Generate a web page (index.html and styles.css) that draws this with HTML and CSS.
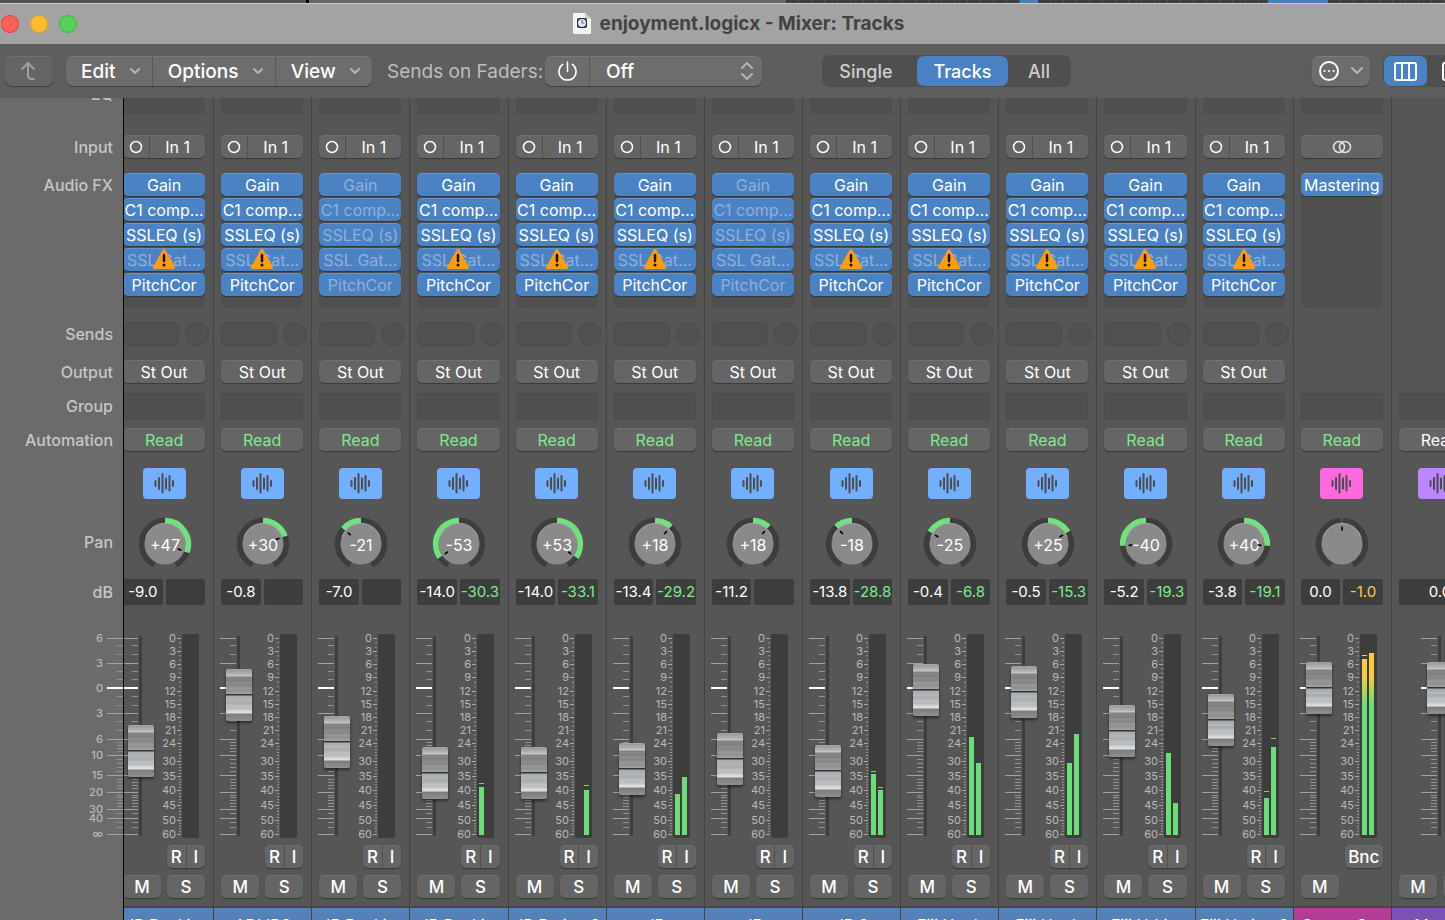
FILE: index.html
```html
<!doctype html>
<html lang="en">
  <head>
    <meta charset="UTF-8" />
    <title>enjoyment.logicx - Mixer: Tracks</title>
    <link rel="stylesheet" href="styles.css">
  </head>
  <body>
    <div class="desktop">
      <span class="desktop-left"></span>
      <span class="desktop-mid"></span>
      <span class="desktop-grid"></span>
      <span class="desktop-region"></span>
      <span class="desktop-grid wide"></span>
      <span class="desktop-region long"></span>
      <span class="desktop-grid rest"></span>
    </div>

    <header class="titlebar">
      <div class="lights">
        <button class="light red" aria-label="Close"></button>
        <button class="light yellow" aria-label="Minimize"></button>
        <button class="light green" aria-label="Zoom"></button>
      </div>
      <h1 class="title">
        <svg class="doc-icon" viewBox="0 0 18 21" aria-hidden="true">
          <path d="M1 0h11l6 6v14a1 1 0 0 1-1 1H1a1 1 0 0 1-1-1V1a1 1 0 0 1 1-1z" fill="#f4f4f4" />
          <path d="M12 0v5a1 1 0 0 0 1 1h5z" fill="#cfcfcf" />
          <rect x="4" y="5" width="10" height="10" rx="2" fill="#2c3138" />
          <circle cx="9" cy="10" r="4" fill="#dfe9f5" />
          <path d="M9 7v3h2.500" fill="none" stroke="#5a7ba6" stroke-width="1.200" />
        </svg>
        enjoyment.logicx - Mixer: Tracks
      </h1>
    </header>

    <nav class="toolbar">
      <button class="tool back" aria-label="Back" disabled>
        <svg viewBox="0 0 18 20"><path d="M2 8l6-6 6 6M8 2v12q0 4 4 4h2" /></svg>
      </button>
      <div class="tool-group menus">
        <button class="menu">Edit <svg viewBox="0 0 12 8"><path d="M2 2l4 4 4-4" /></svg></button>
        <button class="menu">Options <svg viewBox="0 0 12 8"><path d="M2 2l4 4 4-4" /></svg></button>
        <button class="menu">View <svg viewBox="0 0 12 8"><path d="M2 2l4 4 4-4" /></svg></button>
      </div>
      <label class="sends-label" for="sends-on-faders">Sends on Faders:</label>
      <div class="tool-group sends">
        <button class="power" aria-label="Sends on Faders power">
          <svg viewBox="0 0 22 22"><path d="M11 1v10M6 3.500a9 9 0 1 0 10 0" /></svg>
        </button>
        <select id="sends-on-faders" class="sends-select">
          <option>Off</option>
        </select>
        <svg class="updown" viewBox="0 0 12 18"><path d="M1 6l5-5 5 5M1 12l5 5 5-5" /></svg>
      </div>
      <div class="segments">
        <button class="segment">Single</button>
        <button class="segment active">Tracks</button>
        <button class="segment">All</button>
      </div>
      <button class="tool more" aria-label="More">
        <svg class="dots" viewBox="0 0 20 20">
          <circle cx="10" cy="10" r="9" />
          <path d="M5.500 10h.1M10 10h.1M14.500 10h.1" />
        </svg>
        <svg class="chevron" viewBox="0 0 12 8"><path d="M1 1l5 5 5-5" /></svg>
      </button>
      <div class="views">
        <button class="view active" aria-label="Channel strips">
          <svg viewBox="0 0 23 19"><rect x="1" y="1" width="21" height="17" rx="2" /><path d="M8 1v17M15 1v17" /></svg>
        </button>
        <button class="view" aria-label="Narrow strips">
          <svg viewBox="0 0 23 19"><rect x="1" y="1" width="21" height="17" rx="2" /></svg>
        </button>
      </div>
    </nav>

    <main class="mixer">
      <aside class="labels">
        <div class="row-eq">EQ</div>
        <div class="row-input">Input</div>
        <div class="row-fx">Audio FX</div>
        <div class="row-sends">Sends</div>
        <div class="row-output">Output</div>
        <div class="row-group">Group</div>
        <div class="row-auto">Automation</div>
        <div class="row-icon"></div>
        <div class="row-pan">Pan</div>
        <div class="row-db">dB</div>
        <div class="row-fader" id="side-scale"></div>
      </aside>
      <div class="strips-view">
        <div class="strips" id="strips"></div>
      </div>
    </main>

    <script src="mixer.js"></script>
  </body>
</html>
```

FILE: styles.css
```css
* {
  box-sizing: border-box;
}
body {
  margin: 0;
  height: 100vh;
  display: flex;
  flex-direction: column;
  overflow: hidden;
  background: #555;
  color: #fff;
  font-family: Inter, "Liberation Sans", sans-serif;
  font-size: 16px;
}
button,
select {
  font: inherit;
  color: inherit;
  border: none;
  padding: 0;
  margin: 0;
}
svg {
  display: block;
  fill: none;
}

/* arrange window behind */
.desktop {
  display: flex;
  height: 3px;
  background: #4a4a4a;
}
.desktop-left {
  flex: 0 0 309px;
  background: #525252;
  border-right: 3px solid #000;
}
.desktop-mid {
  flex: 0 0 477px;
  background: #666;
}
.desktop-grid {
  flex: 0 0 234px;
  background: repeating-linear-gradient(90deg, #3e3e3e 0 12px, #555 12px 13px);
}
.desktop-region {
  flex: 0 0 18px;
  background: #4b7fbd;
}
.desktop-grid.wide {
  flex-basis: 230px;
}
.desktop-region.long {
  flex-basis: 60px;
}
.desktop-grid.rest {
  flex: 1;
}

/* title bar */
.titlebar {
  position: relative;
  height: 41px;
  display: flex;
  align-items: center;
  justify-content: center;
  background: #a3a3a3;
  border-top: 1px solid #c9c9c9;
}
.lights {
  position: absolute;
  left: 1px;
  display: flex;
  gap: 11px;
}
.light {
  width: 18px;
  height: 18px;
  border-radius: 50%;
}
.light.red {
  background: #fe5f57;
  box-shadow: inset 0 0 0 1px #e0443e;
}
.light.yellow {
  background: #febc2e;
  box-shadow: inset 0 0 0 1px #dea123;
}
.light.green {
  background: #57d15a;
  box-shadow: inset 0 0 0 1px #3fb544;
}
.title {
  display: flex;
  align-items: center;
  gap: 9px;
  margin: 0 0 2px 32px;
  color: #434343;
  font-size: 19px;
  font-weight: 700;
}
.doc-icon {
  width: 18px;
  height: 21px;
}

/* toolbar */
.toolbar {
  height: 54px;
  display: flex;
  align-items: center;
  padding-left: 5px;
  background: #5e5e5e;
  font-size: 19px;
  font-weight: 500;
  overflow: hidden;
}
.toolbar svg {
  flex: none;
  stroke: #b4b4b4;
  stroke-width: 2;
  stroke-linecap: round;
  stroke-linejoin: round;
}
.tool,
.tool-group {
  height: 30px;
  border-radius: 7px;
  background: #6d6d6d;
  box-shadow: 0 1px 1px rgba(0, 0, 0, 0.35), inset 0 1px 0 rgba(255, 255, 255, 0.1);
}
.back {
  flex: none;
  display: flex;
  align-items: center;
  justify-content: center;
  width: 48px;
  background: #646464;
}
.back svg {
  width: 18px;
  height: 20px;
  stroke: #a0a0a0;
}
.tool-group {
  flex: none;
  display: flex;
}
.menus {
  width: 306px;
  margin-left: 13px;
}
.menu {
  flex: auto;
  display: flex;
  align-items: center;
  justify-content: space-between;
  padding: 0 11px 0 15px;
  background: none;
}
.menu + .menu {
  border-left: 1px solid #595959;
}
.menu svg,
.chevron {
  width: 12px;
  height: 8px;
}
.sends-label {
  flex: none;
  width: 173px;
  padding-left: 15px;
  color: #bdbdbd;
  white-space: nowrap;
  font-weight: 400;
}
.sends {
  position: relative;
  width: 217px;
}
.power {
  width: 45px;
  display: flex;
  align-items: center;
  justify-content: center;
  background: none;
  border-right: 1px solid #595959;
}
.toolbar .power svg {
  width: 21px;
  height: 21px;
  stroke: #fff;
  stroke-width: 1.6;
}
.sends-select {
  flex: 1;
  padding-left: 16px;
  appearance: none;
  background: none;
}
.updown {
  position: absolute;
  right: 9px;
  top: 6px;
  width: 12px;
  height: 18px;
  pointer-events: none;
}
.segments {
  flex: none;
  display: flex;
  height: 32px;
  margin-left: 60px;
  padding: 1px;
  border-radius: 8px;
  background: #4f4f4f;
}
.segment {
  width: 62px;
  border-radius: 7px;
  background: none;
  color: #cdcdcd;
  font-size: 18px;
}
.segment:first-child {
  width: 94px;
  padding-right: 8px;
}
.segment.active {
  width: 91px;
  background: #4b82c4;
  color: #fff;
}
.more {
  flex: none;
  display: flex;
  align-items: center;
  justify-content: space-between;
  width: 58px;
  margin-left: auto;
  padding: 0 7px;
}
.toolbar .dots {
  width: 20px;
  height: 20px;
  stroke: #fff;
}
.views {
  flex: none;
  display: flex;
  height: 32px;
  width: 62px;
  margin-left: 13px;
  padding: 1px;
  overflow: hidden;
  border-radius: 8px 0 0 8px;
  background: #4f4f4f;
}
.view {
  flex: none;
  display: flex;
  align-items: center;
  justify-content: center;
  width: 43px;
  border-radius: 7px;
  background: none;
}
.view + .view {
  margin-left: 5px;
}
.view.active {
  background: #4b82c4;
}
.view svg {
  width: 23px;
  height: 19px;
  stroke: #fff;
}

/* mixer area: label rows and strip rows share these heights */
.mixer {
  flex: 1;
  min-height: 0;
  display: flex;
  overflow: hidden;
}
.row-eq {
  height: 37px;
}
.row-input {
  height: 38px;
}
.row-fx {
  height: 149px;
}
.row-sends {
  height: 38px;
}
.row-output {
  height: 33px;
}
.row-group {
  height: 35px;
}
.row-auto {
  height: 40px;
}
.row-icon {
  height: 49px;
}
.row-pan {
  height: 62px;
}
.row-db {
  height: 55px;
}
.row-fader {
  height: 211px;
}

.labels {
  flex: none;
  width: 124px;
  padding-right: 10px;
  border-right: 1px solid #000;
  background: #6b6b6b;
  color: #c6c6c6;
  font-weight: 500;
  line-height: 24px;
  text-align: right;
}
.labels .row-eq {
  height: 41px;
  margin-top: -4px;
  line-height: 0;
}
.labels .row-group {
  line-height: 27px;
}
.labels .row-pan {
  line-height: 50px;
}
.labels .row-db {
  line-height: 27px;
}
.labels .row-fader {
  margin-right: -10px;
}
.side-svg {
  width: 60px;
  height: 211px;
  margin-left: auto;
}

.strips-view {
  flex: 1;
  min-width: 0;
  overflow: hidden;
}
.strips {
  display: grid;
  grid-template-columns: repeat(14, minmax(98px, 1fr));
  margin: 0 -45px 0 -8px;
}
.strip {
  padding: 0 8px 0 7px;
  border-right: 1px solid #434343;
  background: #565656;
  white-space: nowrap;
}
.slot,
.strip .row-eq div {
  background: #4f4f4f;
}
.strip .row-eq div {
  height: 16px;
}
.btn {
  height: 23px;
  border-radius: 5px;
  background: #656565;
  box-shadow: 0 1px 1px rgba(0, 0, 0, 0.35), inset 0 1px 0 rgba(255, 255, 255, 0.08);
  text-align: center;
}
.full {
  display: block;
  width: 100%;
}
.split {
  display: flex;
}
.split button {
  flex: 1;
  background: none;
}
.split button + button {
  border-left: 1px solid #505050;
}
.split .format {
  flex: 0 0 26px;
  display: flex;
  align-items: center;
  justify-content: center;
}
.format svg {
  width: 14px;
  height: 14px;
  stroke: #fff;
  stroke-width: 1.5;
}
.stereo svg {
  width: 20px;
  height: 14px;
  margin: 0 auto;
  stroke: #e6e6e6;
  stroke-width: 1.5;
}

.fx-tray {
  display: flex;
  flex-direction: column;
  gap: 2px;
  height: 135px;
  border-radius: 6px;
  background: #4f4f4f;
}
.fx {
  position: relative;
  height: 23px;
  overflow: hidden;
  border-radius: 5px;
  background: #4b82c4;
  box-shadow: 0 1px 1px rgba(0, 0, 0, 0.35), inset 0 1px 0 rgba(255, 255, 255, 0.15);
  text-align: center;
}
.fx.off {
  color: #8fb0da;
}
.warn {
  position: absolute;
  left: 50%;
  top: 0;
  width: 24px;
  height: 22px;
  margin-left: -12px;
}

.strip .row-sends {
  display: flex;
  gap: 6px;
  margin-right: -4px;
}
.send {
  flex: 1;
  height: 24px;
  border-radius: 6px;
  border: 1px solid #4b4b4b;
  background: #505050;
}
.send-knob {
  width: 24px;
  height: 24px;
  border-radius: 50%;
  border: 1px solid #4b4b4b;
  background: #505050;
}
.group {
  height: 27px;
  border: 1px solid #4c4c4c;
}
.read {
  color: #80ea8d;
}
.read.idle {
  color: #fff;
}
.track-icon {
  display: block;
  width: 43px;
  height: 31px;
  margin: 0 auto;
  border-radius: 4px;
  background: #72b0ff;
}
.track-icon.pink {
  background: #ff69df;
}
.track-icon.violet {
  background: #bb86ff;
}
.track-icon svg {
  width: 21px;
  height: 21px;
  margin: 0 auto;
  stroke: #4d4d4d;
  stroke-width: 2;
  stroke-linecap: round;
}
.strip .row-pan {
  padding-left: 1px;
}
.strip .row-pan svg {
  width: 54px;
  height: 54px;
  margin: 0 auto;
}
.pan-text {
  fill: #fff;
  font-size: 16px;
  text-anchor: middle;
}
.strip .row-db {
  display: flex;
  gap: 3px;
}
.db {
  flex: 1;
  height: 26px;
  border-radius: 2px;
  background: #3d3d3d;
  font-size: 15px;
  line-height: 26px;
  text-align: center;
}
.db.signal {
  color: #80ea8d;
}
.db.hot {
  color: #f7cf46;
}

.strip .row-fader {
  display: flex;
}
.fader {
  position: relative;
  flex: none;
  width: 26px;
  height: 204px;
  margin-left: -1px;
}
.fader.center {
  margin-left: 22px;
}
.fader svg {
  width: 26px;
  height: 204px;
}
/* the input overhangs the groove by half a cap at both ends */
.fader input {
  position: absolute;
  left: 6px;
  top: -22px;
  width: 26px;
  height: 248px;
  margin: 0;
  appearance: none;
  background: none;
  writing-mode: vertical-lr;
  direction: rtl;
}
.fader input::-webkit-slider-thumb {
  appearance: none;
  width: 26px;
  height: 52px;
  border-radius: 2px;
  box-shadow: 0 2px 3px rgba(0, 0, 0, 0.5);
  background: linear-gradient(#b0b0b0 0, #999 1px, #b9b9b9 6px, #cfcfcf 7px, #7e7e7e 8px, #8a8a8a 10px, #7c7c7c 11px, #8e8e8e 15px, #828282 16px, #9c9c9c 20px, #8c8c8c 21px, #a4a4a4 25px, #333 25px, #333 26px, #a8abac 27px, #b4b8ba 32px, #a5a9ab 33px, #c0c4c6 38px, #b2b6b8 39px, #d3d7d9 42px, #dfe3e5 44px, #7c7c7c 45px, #8e8e8e 51px);
}
.meter-svg {
  flex: none;
  width: 50px;
  height: 204px;
  margin: 0 6px 0 auto;
}
.meter-svg text,
.side-svg text {
  fill: #b9b9b9;
  font-size: 11px;
  text-anchor: end;
}

.buttons {
  display: grid;
  grid-template-columns: 1fr 1fr;
  grid-template-rows: 23px 23px;
  gap: 7px 6px;
  height: 61px;
  font-size: 17px;
  font-weight: 500;
}
.rec {
  grid-column: 2;
}
.name {
  margin: 0 -8px 0 -7px;
  height: 36px;
  overflow: hidden;
  border-top: 2px solid #454545;
  background: #5481b8;
  line-height: 34px;
  text-align: center;
}
.name.pink {
  background: #b23c96;
}
.name.violet {
  background: #7b51b6;
}
```

FILE: mixer.js
```js
const FX = [['Gain'], ['C1 comp…'], ['SSLEQ (s)'], ['SSL Gat…', 'warn'], ['PitchCor']];

// cap: fader travel from the top mark, bars/peaks: left and right meter levels from the top of the meter
const tracks = [
  { name: 'JB Backi…', pan: 47, db: '-9.0', cap: 113 },
  { name: 'ADLIBS', pan: 30, db: '-0.8', cap: 57 },
  { name: 'JB Backi…', pan: -21, db: '-7.0', cap: 104, muted: true },
  { name: 'JB Backi…', pan: -53, db: '-14.0', level: '-30.3', cap: 135, bars: [153, 0], peaks: [149, 0] },
  { name: 'JB B…ing 2', pan: 53, db: '-14.0', level: '-33.1', cap: 135, bars: [0, 156], peaks: [0, 151] },
  { name: 'JB', pan: 18, db: '-13.4', level: '-29.2', cap: 131, bars: [160, 143] },
  { name: 'JB', pan: 18, db: '-11.2', cap: 121, muted: true },
  { name: 'JB 2', pan: -18, db: '-13.8', level: '-28.8', cap: 133, bars: [140, 156], peaks: [137, 153] },
  { name: 'Fiji Hook', pan: -25, db: '-0.4', level: '-6.8', cap: 52, bars: [103, 129] },
  { name: 'Fiji Hook', pan: 25, db: '-0.5', level: '-15.3', cap: 54, bars: [129, 100] },
  { name: 'Fiji Hrki…', pan: -40, db: '-5.2', level: '-19.3', cap: 93, bars: [119, 169] },
  { name: 'Fiji H…ing 2', pan: 40, db: '-3.8', level: '-19.1', cap: 82, bars: [164, 113], peaks: [157, 104] },
  { name: 'Stereo Out', pan: 0, db: '0.0', level: '-1.0', cap: 50, bars: [25, 19], peaks: [21, 0], type: 'output' },
  { name: 'Master', db: '0.0', cap: 50, type: 'master' },
];

const faderMajor = [4, 29, 54, 79, 105, 121, 141, 158, 175, 184, 200];
const faderMinor = [11, 20, 37, 45, 62, 71, 87, 96, 108, 111, 114, 117, 125, 129, 133, 137,
  145, 148, 151, 154, 161, 163, 166, 169, 172, 179, 188, 193];
const faderLabels = ['6', '3', '0', '3', '6', '10', '15', '20', '30', '40', '∞'];
const meterMarks = [[0, 4], [3, 17], [6, 30], [9, 43], [12, 57], [15, 70], [18, 83], [21, 96],
  [24, 109], [30, 127], [35, 142], [40, 156], [45, 171], [50, 186], [60, 200]];

function line(x, y, width, color, height = 1) {
  return `<rect x="${x}" y="${y}" width="${width}" height="${height}" fill="${color}"/>`;
}

function faderTicks(x) {
  return faderMajor.map((y, i) => (i === 2 ? line(x, y - 1, 16, '#fff', 2) : line(x, y, 16, '#a2a2a2'))).join('')
    + faderMinor.map((y) => line(x + 10, y, 6, '#929292')).join('');
}

function panKnob(value) {
  const point = (deg, r) => {
    const a = (deg * Math.PI) / 180;
    return `${(27 + r * Math.sin(a)).toFixed(2)} ${(27 - r * Math.cos(a)).toFixed(2)}`;
  };
  const arc = (from, to) => `M${point(from, 23.2)}A23.2 23.2 0 ${to - from > 180 ? 1 : 0} 1 ${point(to, 23.2)}`;
  const angle = value * 2.36;
  const lit = value === 0 ? arc(-0.5, 0.5) : arc(Math.min(0, angle), Math.max(0, angle));
  const text = value === 0 ? '' : (value > 0 ? '+' : '') + value;
  return `<svg viewBox="0 0 54 54" role="img" aria-label="Pan ${value}">
    <path d="${arc(-153, 153)}" stroke="#3d3d3d" stroke-width="6"/>
    <path d="${lit}" stroke="#72e080" stroke-width="6"/>
    <circle cx="27" cy="27" r="20.5" fill="#8a8a8a"/>
    <path d="M8 20a20 20 0 0 1 38 0" stroke="#a8a8a8"/>
    <text class="pan-text" x="27" y="34">${text}</text>
    <path d="M${point(angle, 13.5)}L${point(angle, 17.5)}" stroke="#000" stroke-width="1.6"/>
  </svg>`;
}

function meter(track) {
  let out = '';
  meterMarks.forEach(([db, y], i) => {
    out += `<text x="27" y="${y + 4}">${db}</text>` + line(28, y, 4, '#aaa');
    const next = meterMarks[i + 1];
    if (!next) return;
    const steps = db < 24 ? 3 : Math.round((next[1] - y) / 2.9);
    for (let s = 1; s < steps; s++) {
      out += line(30, (y + ((next[1] - y) * s) / steps).toFixed(1), 2, '#999');
    }
  });
  out += '<rect x="33" y="0" width="17" height="204" rx="2" fill="#3d3d3d"/>';
  const fill = track.type === 'output' ? 'url(#hot)' : '#6cdd7a';
  (track.bars || []).forEach((top, i) => {
    if (top) out += line(35 + i * 7, top, 5, fill, 201 - top);
  });
  (track.peaks || []).forEach((top, i) => {
    if (top) out += line(35 + i * 7, top, 5, track.type === 'output' ? '#f8cc3d' : '#6cdd7a');
  });
  return `<svg class="meter-svg" viewBox="0 0 50 204">
    <defs><linearGradient id="hot" gradientUnits="userSpaceOnUse" x1="0" y1="19" x2="0" y2="70">
      <stop offset="0.450" stop-color="#f8cc3d"/><stop offset="1" stop-color="#6cdd7a"/>
    </linearGradient></defs>${out}</svg>`;
}

function fader(track) {
  return `<div class="fader${track.type === 'master' ? ' center' : ''}">
    <svg viewBox="0 0 26 204">${faderTicks(0)}<rect x="17" y="2" width="3" height="200" rx="1" fill="#3e3e3e"/></svg>
    <input type="range" min="0" max="196" value="${196 - track.cap}" aria-label="${track.name} volume">
  </div>`;
}

const warning = `<svg class="warn" viewBox="0 0 24 22">
  <path d="M12 2.500L21.500 19.500H2.500z" fill="#ff9d0a" stroke="#ff9d0a" stroke-width="3" stroke-linejoin="round"/>
  <path d="M12 7v6" stroke="#111" stroke-width="2.500" stroke-linecap="round"/>
  <circle cx="12" cy="17" r="1.500" fill="#111"/>
</svg>`;

const waveform = `<svg viewBox="0 0 21 21" aria-hidden="true">
  <path d="M1.500 8v5M5 5v11M8.500 1v18.500M12 5.500v10M15.500 3v14.500M19 8v5"/>
</svg>`;

function inputRow(type) {
  if (type === 'master') return '';
  if (type === 'output') {
    return `<button class="btn full stereo" aria-label="Stereo">
      <svg viewBox="0 0 20 14"><circle cx="7" cy="7" r="5.500"/><circle cx="13" cy="7" r="5.500"/></svg></button>`;
  }
  return `<div class="btn split">
    <button class="format" aria-label="Mono"><svg viewBox="0 0 14 14"><circle cx="7" cy="7" r="5.500"/></svg></button>
    <button>In 1</button></div>`;
}

function fxRow(track) {
  if (track.type === 'master') return '';
  const list = track.type === 'output' ? [['Mastering']] : FX;
  return '<div class="fx-tray">' + list.map(([label, warn]) =>
    `<button class="fx${warn || track.muted ? ' off' : ''}">${label}${warn && !track.muted ? warning : ''}</button>`
  ).join('') + '</div>';
}

function strip(track) {
  const type = track.type || 'audio';
  const tint = { audio: '', output: ' pink', master: ' violet' }[type];
  const level = type === 'master' ? '' : `<div class="db ${type === 'output' ? 'hot' : 'signal'}">${track.level || ''}</div>`;
  const rec = {
    audio: '<div class="btn split rec"><button>R</button><button>I</button></div>',
    output: '<button class="btn rec">Bnc</button>',
    master: '<span class="rec"></span>',
  }[type];

  return `<section class="strip">
    <div class="row-eq">${type === 'master' ? '' : '<div></div>'}</div>
    <div class="row-input">${inputRow(type)}</div>
    <div class="row-fx">${fxRow(track)}</div>
    <div class="row-sends">${type === 'audio' ? '<div class="send"></div><div class="send-knob"></div>' : ''}</div>
    <div class="row-output">${type === 'audio' ? '<button class="btn full">St Out</button>' : ''}</div>
    <div class="row-group"><div class="slot group"></div></div>
    <div class="row-auto"><button class="btn full read${type === 'master' ? ' idle' : ''}">Read</button></div>
    <div class="row-icon"><button class="track-icon${tint}" aria-label="Track icon">${waveform}</button></div>
    <div class="row-pan">${type === 'master' ? '' : panKnob(track.pan)}</div>
    <div class="row-db"><div class="db">${track.db}</div>${level}</div>
    <div class="row-fader">${fader(track)}${type === 'master' ? '' : meter(track)}</div>
    <div class="buttons">${rec}<button class="btn">M</button>${type === 'output' ? '' : '<button class="btn">S</button>'}</div>
    <div class="name${tint}">${track.name}</div>
  </section>`;
}

document.getElementById('strips').innerHTML = tracks.map(strip).join('');
document.getElementById('side-scale').innerHTML = `<svg class="side-svg" viewBox="0 0 60 211">${faderTicks(44)}${
  faderMajor.map((y, i) => `<text x="40" y="${y + 4}">${faderLabels[i]}</text>`).join('')}</svg>`;
```
